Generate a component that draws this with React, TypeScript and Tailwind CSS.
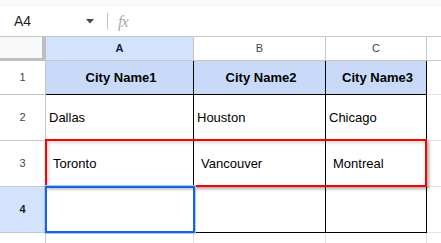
import React from "react";

const font = { fontFamily: '"Liberation Sans", Arial, sans-serif' };

function ColHead({ label, selected, last }: { label: string; selected?: boolean; last?: boolean }) {
  return (
    <div
      className={`flex items-center justify-center border-b border-[#c4c7c5] text-[11px] ${last ? "" : "border-r"} ${
        selected ? "bg-[#d3e3fd] text-[#0b1f4a] font-bold" : "bg-white text-[#444746]"
      }`}
    >
      {label}
    </div>
  );
}

function RowHead({ label, selected }: { label: string; selected?: boolean }) {
  return (
    <div
      className={`flex items-center justify-center border-r border-b border-[#c4c7c5] text-[11px] ${
        selected ? "bg-[#d3e3fd] text-[#1f1f1f] font-bold" : "bg-white text-[#444746]"
      }`}
    >
      {label}
    </div>
  );
}

function Cell({
  text,
  header,
  indent,
}: {
  text?: string;
  header?: boolean;
  indent?: boolean;
}) {
  return (
    <div
      className={`flex items-center border-r border-b border-black text-[13px] text-black ${
        header ? "bg-[#c9daf8] justify-center font-bold" : "bg-white"
      } ${indent ? "pl-[7px]" : "pl-[3px]"}`}
    >
      {text}
    </div>
  );
}

function Empty({ right = true }: { right?: boolean }) {
  return <div className={`bg-white border-b border-[#e1e1e1] ${right ? "border-r" : ""}`} />;
}

export default function App() {
  return (
    <div className="relative w-[441px] h-[243px] overflow-hidden bg-white" style={font}>
      <div className="h-[7px] bg-[#f8f9fa]" />
      <div className="h-[30px] flex items-center border-b border-[#c4c7c5] bg-white">
        <div className="w-[78px] pl-[14px] text-[14px] text-[#1f1f1f]">A4</div>
        <svg width="8" height="5" viewBox="0 0 8 5" className="ml-[8px]">
          <path d="M0 0 L8 0 L4 4.5 Z" fill="#444746" />
        </svg>
        <div className="ml-[13px] w-px h-[17px] bg-[#c4c7c5]" />
        <div
          className="ml-[10px] text-[16px] italic text-[#aaaaaa] tracking-[-1px]"
          style={{ fontFamily: '"Liberation Serif", "Times New Roman", serif' }}
        >
          fx
        </div>
      </div>
      <div className="grid grid-cols-[46px_148px_132px_101px_1fr] grid-rows-[24px_34px_46px_46px_46px_20px]">
        <div className="bg-[#f8f9fa] border-r-4 border-b-[3px] border-[#bfbfbf]" />
        <ColHead label="A" selected />
        <ColHead label="B" />
        <ColHead label="C" />
        <ColHead label="" last />

        <RowHead label="1" />
        <Cell text="City Name1" header />
        <Cell text="City Name2" header />
        <Cell text="City Name3" header />
        <Empty right={false} />

        <RowHead label="2" />
        <Cell text="Dallas" />
        <Cell text="Houston" />
        <Cell text="Chicago" />
        <Empty right={false} />

        <RowHead label="3" />
        <Cell text="Toronto" indent />
        <Cell text="Vancouver" indent />
        <Cell text="Montreal" indent />
        <Empty right={false} />

        <RowHead label="4" selected />
        <Cell />
        <Cell />
        <Cell />
        <Empty right={false} />

        <RowHead label="" />
        <Empty />
        <Empty />
        <Empty />
        <Empty right={false} />
      </div>

      {/* red highlight box */}
      <div className="absolute left-[45px] top-[139px] w-[382px] h-[48px] border-2 border-[#ff0000] shadow-[2px_2px_3px_rgba(0,0,0,0.35),inset_2px_2px_3px_rgba(0,0,0,0.15)]" />

      {/* selection box */}
      <div className="absolute left-[45px] top-[186px] w-[150px] h-[47px] border-2 border-[#1b62dd] shadow-[0_0_0_1px_#a8c7fa]" />
    </div>
  );
}
